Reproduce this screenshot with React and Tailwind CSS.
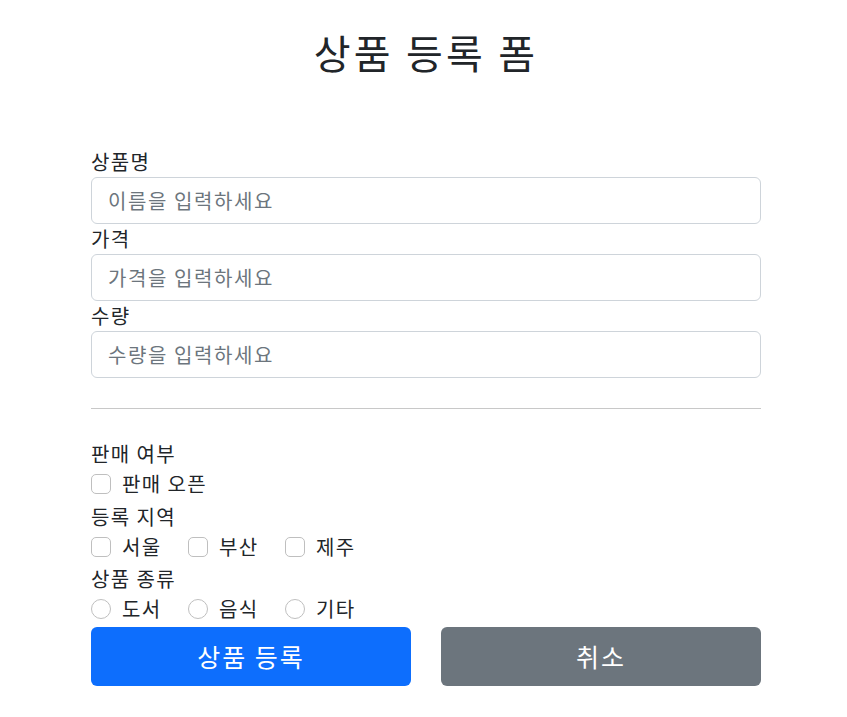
export default function App() {
  const font = { fontFamily: '"Noto Sans CJK KR", "Noto Sans", sans-serif' };

  const Check = ({ label, radio }) => (
    <label className="flex items-center w-[97px] h-[30px]">
      <span
        className={`w-5 h-5 border border-[#bfbfbf] bg-white shrink-0 ${radio ? 'rounded-full' : 'rounded-[5px]'}`}
      />
      <span className="ml-[11px] whitespace-nowrap">{label}</span>
    </label>
  );

  return (
    <div className="min-h-screen bg-white text-[#212529] text-[20px] leading-[1.5] tracking-[0.07em]" style={font}>
      <div className="w-[670px] ml-[91px] pt-[28px]">
        <h2 className="text-center text-[40px] leading-[48px] font-normal tracking-[0.08em] mb-[71px]">상품 등록 폼</h2>

        <form>
          {[
            ['상품명', '이름을 입력하세요'],
            ['가격', '가격을 입력하세요'],
            ['수량', '수량을 입력하세요'],
          ].map(([label, ph]) => (
            <div key={label}>
              <div className="h-[30px] leading-[30px]">{label}</div>
              <input
                placeholder={ph}
                className="block w-full h-[47px] px-[16px] border border-[#ced4da] rounded-[6px] bg-white text-[20px] tracking-[0.08em] placeholder:text-[#6c757d] outline-none"
                style={font}
              />
            </div>
          ))}

          <hr className="my-[30px] border-0 border-t border-[#c8c8c8]" />

          <div className="h-[30px] leading-[30px]">판매 여부</div>
          <div className="flex mb-[2.5px]">
            <label className="flex items-center h-[30px]">
              <span className="w-5 h-5 border border-[#bfbfbf] bg-white rounded-[5px]" />
              <span className="ml-[11px]">판매 오픈</span>
            </label>
          </div>

          <div className="h-[30px] leading-[30px]">등록 지역</div>
          <div className="flex mb-[2.5px]">
            <Check label="서울" />
            <Check label="부산" />
            <Check label="제주" />
          </div>

          <div className="h-[30px] leading-[30px]">상품 종류</div>
          <div className="flex mb-[3px]">
            <Check label="도서" radio />
            <Check label="음식" radio />
            <Check label="기타" radio />
          </div>

          <div className="grid grid-cols-2 gap-[30px]">
            <button
              type="button"
              className="h-[59px] rounded-[6px] bg-[#0d6efd] text-white text-[25px] tracking-[0.08em]"
              style={font}
            >
              상품 등록
            </button>
            <button
              type="button"
              className="h-[59px] rounded-[6px] bg-[#6c757d] text-white text-[25px] tracking-[0.08em]"
              style={font}
            >
              취소
            </button>
          </div>
        </form>
      </div>
    </div>
  );
}
